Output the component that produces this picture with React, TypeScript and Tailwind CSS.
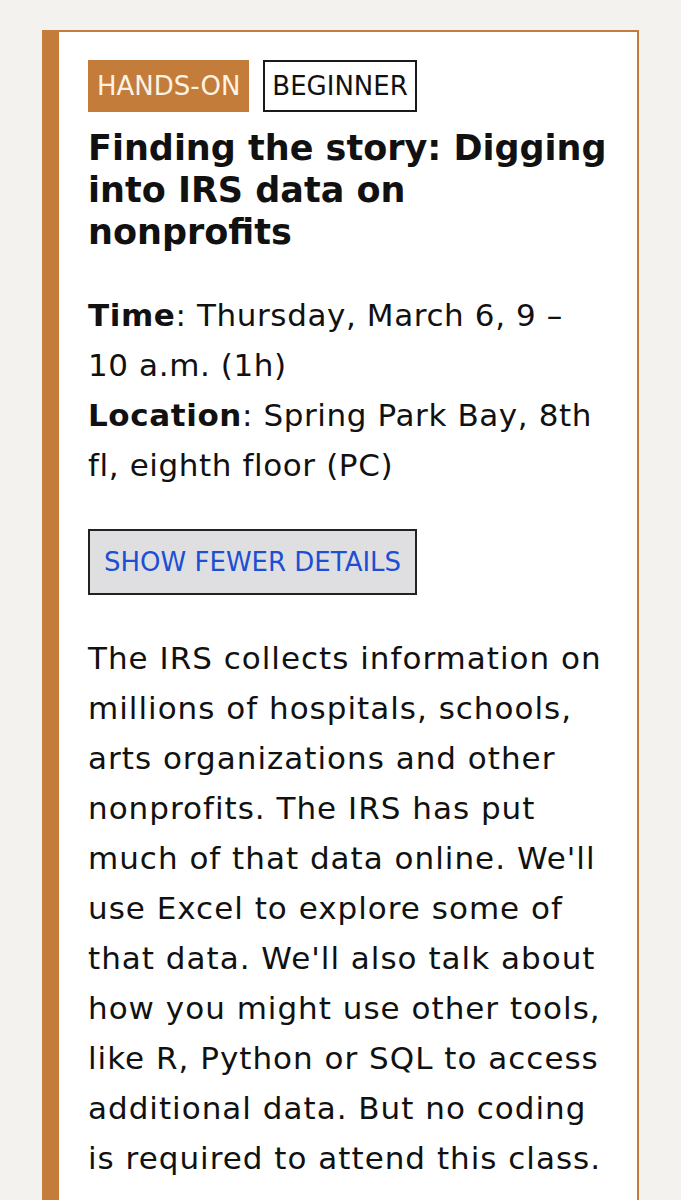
const body = "font-['DejaVu_Sans',sans-serif]";

const Badge = ({ label, filled }: { label: string; filled?: boolean }) => (
  <span
    className={
      filled
        ? "flex h-[52px] items-center bg-[#c47c3b] px-[9px] text-[26px] leading-none text-[#fdf3e4]"
        : "flex h-[52px] items-center border-2 border-[#1a1a1a] bg-white px-[7px] text-[26px] leading-none text-[#111]"
    }
  >
    {label}
  </span>
);

export default function App() {
  return (
    <div className={`min-h-screen bg-[#f3f2ee] px-[42px] pt-[30px] ${body}`}>
      <article className="border-t-2 border-r-2 border-l-[17px] border-[#c47c3b] bg-white pb-10 pl-[29px] pr-[30px] pt-[28px] text-[#111]">
        <div className="flex gap-[14px]">
          <Badge label="HANDS-ON" filled />
          <Badge label="BEGINNER" />
        </div>

        <h2 className="mt-[15px] text-[35px] font-bold leading-[42px] text-[#111]">
          Finding the story: Digging into IRS data on nonprofits
        </h2>

        <div className="mt-[37px] text-[31px] leading-[50px] tracking-[0.6px] slashed-zero">
          <p>
            <span className="font-bold">Time</span>: Thursday, March 6, 9 – 10 a.m. (1h)
          </p>
          <p>
            <span className="font-bold">Location</span>: Spring Park Bay, 8th fl, eighth floor (PC)
          </p>
        </div>

        <button className="mt-[39px] h-[66px] border-2 border-[#222] bg-[#dfdfe2] px-[14px] text-[26px] leading-none text-[#1c4fd3]">
          SHOW FEWER DETAILS
        </button>

        <p className="mt-[38px] text-[31px] leading-[50px] tracking-[1px]">
          The IRS collects information on millions of hospitals, schools, arts organizations and other
          nonprofits. The IRS has put much of that data online. We'll use Excel to explore some of that
          data. We'll also talk about how you might use other tools, like R, Python or SQL to access
          additional data. But no coding is required to attend this class.
        </p>
      </article>
    </div>
  );
}
